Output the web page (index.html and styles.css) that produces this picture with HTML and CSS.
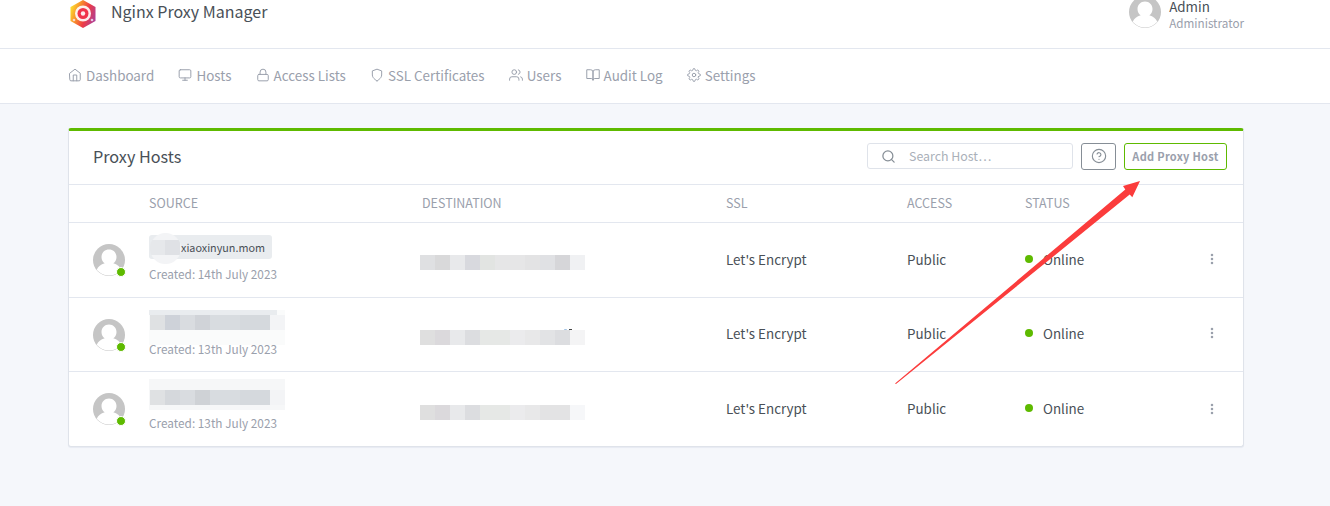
FILE: index.html
```html
<!DOCTYPE html>
<html lang="en">

<head>
    <meta charset="UTF-8">
    <meta name="viewport" content="width=device-width, initial-scale=1.0">
    <title>Nginx Proxy Manager</title>
    <link rel="stylesheet" href="styles.css">
</head>

<body>

    <svg class="defs" width="0" height="0">
        <symbol id="avatar" viewBox="0 0 32 32">
            <circle cx="16" cy="16" r="16" fill="#c5c5c5"></circle>
            <path d="M16 5.500c4.300 0 7.500 3.200 7.500 7.500 0 2.800-1.300 5-3.200 6.300 3.800 1 6.600 3.300 8 6.500a16 16 0 0 1-24.600 0c1.400-3.200 4.200-5.500 8-6.500-1.900-1.300-3.200-3.500-3.200-6.300 0-4.300 3.200-7.500 7.500-7.500z" fill="#fff"></path>
        </symbol>
        <symbol id="i-home" viewBox="0 0 24 24">
            <path d="M3 9l9-7 9 7v11a2 2 0 0 1-2 2H5a2 2 0 0 1-2-2z"></path>
            <polyline points="9 22 9 12 15 12 15 22"></polyline>
        </symbol>
        <symbol id="i-monitor" viewBox="0 0 24 24">
            <rect x="2" y="3" width="20" height="14" rx="2"></rect>
            <line x1="8" y1="21" x2="16" y2="21"></line>
            <line x1="12" y1="17" x2="12" y2="21"></line>
        </symbol>
        <symbol id="i-lock" viewBox="0 0 24 24">
            <rect x="3" y="11" width="18" height="11" rx="2"></rect>
            <path d="M7 11V7a5 5 0 0 1 10 0v4"></path>
        </symbol>
        <symbol id="i-shield" viewBox="0 0 24 24">
            <path d="M12 22s8-4 8-10V5l-8-3-8 3v7c0 6 8 10 8 10z"></path>
        </symbol>
        <symbol id="i-users" viewBox="0 0 24 24">
            <path d="M17 21v-2a4 4 0 0 0-4-4H5a4 4 0 0 0-4 4v2"></path>
            <circle cx="9" cy="7" r="4"></circle>
            <path d="M23 21v-2a4 4 0 0 0-3-3.870"></path>
            <path d="M16 3.130a4 4 0 0 1 0 7.750"></path>
        </symbol>
        <symbol id="i-book" viewBox="0 0 24 24">
            <path d="M2 3h6a4 4 0 0 1 4 4v14a3 3 0 0 0-3-3H2z"></path>
            <path d="M22 3h-6a4 4 0 0 0-4 4v14a3 3 0 0 1 3-3h7z"></path>
        </symbol>
        <symbol id="i-settings" viewBox="0 0 24 24">
            <circle cx="12" cy="12" r="3"></circle>
            <path d="M19.4 15a1.65 1.65 0 0 0 .33 1.82l.06.06a2 2 0 0 1 0 2.83 2 2 0 0 1-2.83 0l-.06-.06a1.65 1.65 0 0 0-1.82-.33 1.65 1.65 0 0 0-1 1.51V21a2 2 0 0 1-2 2 2 2 0 0 1-2-2v-.09A1.65 1.65 0 0 0 9 19.4a1.65 1.65 0 0 0-1.82.33l-.06.06a2 2 0 0 1-2.83 0 2 2 0 0 1 0-2.83l.06-.06a1.65 1.65 0 0 0 .33-1.82 1.65 1.65 0 0 0-1.51-1H3a2 2 0 0 1-2-2 2 2 0 0 1 2-2h.09A1.65 1.65 0 0 0 4.6 9a1.65 1.65 0 0 0-.33-1.82l-.06-.06a2 2 0 0 1 0-2.83 2 2 0 0 1 2.83 0l.06.06a1.65 1.65 0 0 0 1.82.33H9a1.65 1.65 0 0 0 1-1.51V3a2 2 0 0 1 2-2 2 2 0 0 1 2 2v.09a1.65 1.65 0 0 0 1 1.51 1.65 1.65 0 0 0 1.82-.33l.06-.06a2 2 0 0 1 2.83 0 2 2 0 0 1 0 2.83l-.06.06a1.65 1.65 0 0 0-.33 1.82V9a1.65 1.65 0 0 0 1.51 1H21a2 2 0 0 1 2 2 2 2 0 0 1-2 2h-.09a1.65 1.65 0 0 0-1.51 1z"></path>
        </symbol>
        <symbol id="i-dots" viewBox="0 0 24 24">
            <circle cx="12" cy="12" r="1.200"></circle>
            <circle cx="12" cy="5" r="1.200"></circle>
            <circle cx="12" cy="19" r="1.200"></circle>
        </symbol>
        <linearGradient id="logoFill" x1="0" y1="0.35" x2="1" y2="0.75">
            <stop offset="0" stop-color="#fcd92e"></stop>
            <stop offset="0.3" stop-color="#f78a2c"></stop>
            <stop offset="0.6" stop-color="#ee3b45"></stop>
            <stop offset="1" stop-color="#a93f9c"></stop>
        </linearGradient>
    </svg>

    <div class="header">
        <div class="container headerInner">
            <div class="brand">
                <svg class="logo" viewBox="0 0 28 28">
                    <polygon points="14,0 26.500,7 26.500,21 14,28 1.500,21 1.500,7" fill="url(#logoFill)"></polygon>
                    <circle cx="14" cy="13.500" r="8" fill="#fff" fill-opacity="0.9"></circle>
                    <circle cx="14" cy="13.500" r="5.500" fill="#f0344c"></circle>
                    <circle cx="14" cy="13.500" r="2.200" fill="#fdeef0"></circle>
                    <circle cx="5" cy="20" r="1.300" fill="#fbd7c4"></circle>
                    <circle cx="23" cy="20" r="1.300" fill="#e7c8e4"></circle>
                </svg>
                <span>Nginx Proxy Manager</span>
            </div>
            <div class="user">
                <svg class="avatar"><use href="#avatar"></use></svg>
                <div class="userText">
                    <p>Admin</p>
                    <small>Administrator</small>
                </div>
            </div>
        </div>
    </div>

    <div class="nav">
        <div class="container navInner">
            <a><svg class="icon"><use href="#i-home"></use></svg>Dashboard</a>
            <a><svg class="icon"><use href="#i-monitor"></use></svg>Hosts</a>
            <a><svg class="icon"><use href="#i-lock"></use></svg>Access Lists</a>
            <a><svg class="icon"><use href="#i-shield"></use></svg>SSL Certificates</a>
            <a><svg class="icon"><use href="#i-users"></use></svg>Users</a>
            <a><svg class="icon"><use href="#i-book"></use></svg>Audit Log</a>
            <a><svg class="icon"><use href="#i-settings"></use></svg>Settings</a>
        </div>
    </div>

    <div class="container">
        <div class="card">
            <div class="cardHeader">
                <h3>Proxy Hosts</h3>
                <div class="search">
                    <svg class="icon" viewBox="0 0 24 24"><circle cx="11" cy="11" r="8"></circle><line x1="21" y1="21" x2="16.650" y2="16.650"></line></svg>
                    <span>Search Host…</span>
                </div>
                <button class="helpBtn">
                    <svg class="icon" viewBox="0 0 24 24"><circle cx="12" cy="12" r="10"></circle><path d="M9.090 9a3 3 0 0 1 5.830 1c0 2-3 3-3 3"></path><line x1="12" y1="17" x2="12.010" y2="17"></line></svg>
                </button>
                <button class="addBtn">Add Proxy Host</button>
            </div>

            <div class="row head">
                <div></div>
                <div>Source</div>
                <div>Destination</div>
                <div>SSL</div>
                <div>Access</div>
                <div>Status</div>
                <div></div>
            </div>

            <div class="row first">
                <div class="avatarCell"><svg class="avatar"><use href="#avatar"></use></svg><i></i></div>
                <div class="source">
                    <div class="chip">xiaoxinyun.mom<b class="maskRound"></b></div>
                    <small>Created: 14th July 2023</small>
                </div>
                <div><div class="mosaic destA"></div></div>
                <div>Let's Encrypt</div>
                <div>Public</div>
                <div class="status"><i></i>Online</div>
                <div class="more"><svg class="icon"><use href="#i-dots"></use></svg></div>
            </div>

            <div class="row second">
                <div class="avatarCell"><svg class="avatar"><use href="#avatar"></use></svg><i></i></div>
                <div class="source">
                    <div class="chip blank"><b class="maskWide"></b></div>
                    <small>Created: 13th July 2023</small>
                </div>
                <div><div class="mosaic destB"></div></div>
                <div>Let's Encrypt</div>
                <div>Public</div>
                <div class="status"><i></i>Online</div>
                <div class="more"><svg class="icon"><use href="#i-dots"></use></svg></div>
            </div>

            <div class="row third">
                <div class="avatarCell"><svg class="avatar"><use href="#avatar"></use></svg><i></i></div>
                <div class="source">
                    <div class="chip blank"><b class="maskWide"></b></div>
                    <small>Created: 13th July 2023</small>
                </div>
                <div><div class="mosaic destC"></div></div>
                <div>Let's Encrypt</div>
                <div>Public</div>
                <div class="status"><i></i>Online</div>
                <div class="more"><svg class="icon"><use href="#i-dots"></use></svg></div>
            </div>
        </div>
    </div>

    <!-- annotation drawn on top of the screenshot -->
    <svg class="arrow" width="1330" height="506" viewBox="0 0 1330 506">
        <polygon points="895,383.500 1125.300,189.500 1123,186 1140,181 1132.300,197.300 1129.700,194.600 896,384" fill="#fb3c3c"></polygon>
    </svg>

</body>

</html>
```

FILE: styles.css
```css
* {
    margin: 0;
    padding: 0;
    box-sizing: border-box;
}

html,
body {
    width: 100%;
    height: 100%;
    overflow: hidden;
}

body {
    position: relative;
    font-family: "Noto Sans CJK SC", "Open Sans", sans-serif;
    font-size: 13.4px;
    color: #495057;
    background-color: #f5f7fb;
}

.defs {
    position: absolute;
}

.container {
    width: 1176px;
    margin-left: 68px;
}

.icon {
    width: 14px;
    height: 14px;
    fill: none;
    stroke: currentColor;
    stroke-width: 2;
    stroke-linecap: round;
    stroke-linejoin: round;
}

.avatar {
    display: block;
    width: 32px;
    height: 32px;
}

/* top bar */
.header {
    height: 49px;
    background-color: #fff;
    border-bottom: 1px solid #e3e7ef;
}

.headerInner {
    height: 48px;
    display: flex;
    align-items: flex-end;
    justify-content: space-between;
    padding-bottom: 20px;
}

.brand {
    display: flex;
    align-items: center;
    height: 28px;
    font-size: 16px;
    line-height: 24px;
    color: #495057;
}

.logo {
    width: 28px;
    height: 28px;
    margin-left: 1px;
    margin-right: 14px;
}

.brand span {
    margin-top: -6px;
}

.user {
    display: flex;
    align-items: flex-end;
}

.userText {
    margin-left: 8px;
}

.userText p {
    font-size: 13.4px;
    line-height: 12px;
    margin-bottom: 2px;
}

.userText small {
    display: block;
    font-size: 11.7px;
    line-height: 18px;
    color: #9aa0ac;
    margin-bottom: -4px;
}

/* menu bar */
.nav {
    height: 55px;
    background-color: #fff;
    border-bottom: 1px solid #e3e7ef;
}

.navInner {
    height: 54px;
    display: flex;
    align-items: center;
    gap: 24.2px;
    padding-bottom: 2px;
}

.nav a {
    display: flex;
    align-items: center;
    font-size: 13.4px;
    line-height: 20px;
    color: #9aa0ac;
}

.nav .icon {
    margin-right: 4px;
    stroke-width: 1.700;
}

/* card */
.card {
    height: 319px;
    margin-top: 24px;
    background-color: #fff;
    border: 1px solid #dfe3ea;
    border-top: 3px solid #5eba00;
    border-radius: 3px;
    box-shadow: 0 1px 1px rgba(0, 40, 100, 0.06);
}

.cardHeader {
    height: 54px;
    display: flex;
    align-items: center;
    padding: 0 16px 3px 24px;
    border-bottom: 1px solid #e3e7ef;
}

.cardHeader h3 {
    flex: 1;
    font-size: 16.2px;
    font-weight: 400;
    line-height: 24px;
}

.search {
    width: 206px;
    height: 26px;
    display: flex;
    align-items: center;
    padding-left: 13px;
    font-size: 12.4px;
    color: #aab0b9;
    border: 1px solid #dfe3ea;
    border-radius: 3px;
}

.search .icon {
    width: 15px;
    height: 15px;
    margin-right: 13px;
    color: #868e96;
}

.helpBtn {
    width: 35px;
    height: 27px;
    display: flex;
    align-items: center;
    justify-content: center;
    margin-left: 8px;
    color: #868e96;
    background-color: #fff;
    border: 1px solid #868e96;
    border-radius: 3px;
}

.helpBtn .icon {
    width: 16px;
    height: 16px;
    stroke-width: 1.700;
}

.addBtn {
    width: 103px;
    height: 27px;
    margin-left: 8px;
    font-family: inherit;
    font-size: 11px;
    font-weight: 700;
    letter-spacing: 0.3px;
    color: #9aa0ac;
    background-color: #fff;
    border: 1px solid #5eba00;
    border-radius: 3px;
}

/* table */
.row {
    display: grid;
    grid-template-columns: 80px 273px 304px 181px 118px 1fr 62px;
    align-items: center;
    padding-bottom: 2px;
    border-bottom: 1px solid #e3e7ef;
}

.head {
    height: 38px;
    font-size: 12.5px;
    color: #9aa0ac;
    text-transform: uppercase;
}

.first {
    height: 75px;
}

.second {
    height: 74px;
}

.third {
    height: 74px;
    border-bottom: 0;
}

.second > div:nth-child(n+4) {
    margin-bottom: 2px;
}

.avatarCell {
    position: relative;
    width: 32px;
    margin-top: 2px;
    margin-left: 24px;
}

.avatarCell i {
    position: absolute;
    right: -1px;
    bottom: -1px;
    width: 10px;
    height: 10px;
    background-color: #5eba00;
    border: 1px solid #fff;
    border-radius: 50%;
}

.source small {
    display: block;
    margin-top: 6px;
    font-size: 11.8px;
    line-height: 18px;
    color: #9aa0ac;
}

.chip {
    position: relative;
    width: 123px;
    height: 24px;
    padding-left: 32px;
    font-size: 10.8px;
    line-height: 24px;
    background-color: #e9ecef;
    border-radius: 3px;
}

.blank {
    width: 128px;
}

/* blurred parts of the screenshot */
.maskRound {
    position: absolute;
    left: 1px;
    top: -2px;
    width: 31px;
    height: 31px;
    background-color: #f3f4f6;
    background-image: linear-gradient(90deg, #e6e8eb 15px, #dfe1e5 15px 30px, transparent 30px);
    background-size: 100% 15px;
    background-position: 0 7px;
    background-repeat: no-repeat;
    border-radius: 50%;
}

.maskWide {
    position: absolute;
    left: 0;
    top: 0;
    width: 136px;
    height: 35px;
    background-color: #fafbfb;
    background-image: linear-gradient(90deg, #dfe1e3 15px, #ced2d9 15px 30px, #d9dce0 30px 45px, #d0d3d8 45px 60px, #d8dce0 60px 90px, #d5d9dd 90px 120px, #f3f4f6 120px), linear-gradient(#e9ecef, #e9ecef);
    background-size: 100% 15px, 128px 5px;
    background-position: 1px 5px, 0 0;
    background-repeat: no-repeat;
}

.third .maskWide {
    top: -5px;
    height: 31px;
    background-color: #f6f7f8;
    background-image: linear-gradient(90deg, #dfe1e3 15px, #d5d8dc 15px 30px, #d9dce0 30px 45px, #cfd2d6 45px 60px, #d8dce0 60px 90px, #d5d9dd 90px 120px, #f3f4f6 120px);
    background-size: 100% 15px;
    background-position: 1px 11px;
}

.mosaic {
    position: relative;
    width: 165px;
    height: 15px;
    margin-top: 7px;
    margin-left: -2px;
}

.destA {
    background-image: linear-gradient(90deg, #dfe0e2 15px, #d9d9da 15px 30px, #e8e9eb 30px 45px, #d8d9de 45px 60px, #e2e4e2 60px 75px, #e6e6e7 75px 105px, #e3e3e4 105px 120px, #e0e1e4 120px 135px, #d6d6d9 135px 150px, #f0f1f3 150px);
}

.destB {
    margin-top: 8px;
    background-image: linear-gradient(90deg, #dfdfdf 15px, #dbd9dc 15px 30px, #e8e9eb 30px 45px, #dcdde0 45px 60px, #e6e8e6 60px 90px, #ebebed 90px 105px, #e8e8e9 105px 120px, #e2e3e5 120px 135px, #dcdde0 135px 150px, #f4f4f5 150px);
}

/* bit of text the blur left uncovered */
.destB::before {
    content: "";
    position: absolute;
    left: 149px;
    top: -1px;
    width: 3px;
    height: 1px;
    background-color: #444;
    box-shadow: -5px 0 0 -0.2px #6a9fd8;
}

.destC {
    margin-top: 9px;
    background-image: linear-gradient(90deg, #dfdfdf 15px, #dbd9dc 15px 30px, #e8e9eb 30px 45px, #dcdde0 45px 60px, #e6e8e6 60px 90px, #ebebed 90px 105px, #e8e8e9 105px 120px, #e3e3e4 120px 150px, #f6f7f9 150px);
}

.status {
    display: flex;
    align-items: center;
}

.status i {
    width: 8px;
    height: 8px;
    margin-right: 10px;
    background-color: #5eba00;
    border-radius: 50%;
}

.more {
    display: flex;
    justify-content: center;
    color: #9aa0ac;
}

.second .more {
    margin-bottom: 0;
}

.third .more {
    margin-top: 2px;
}

.arrow {
    position: absolute;
    left: 0;
    top: 0;
}
```
